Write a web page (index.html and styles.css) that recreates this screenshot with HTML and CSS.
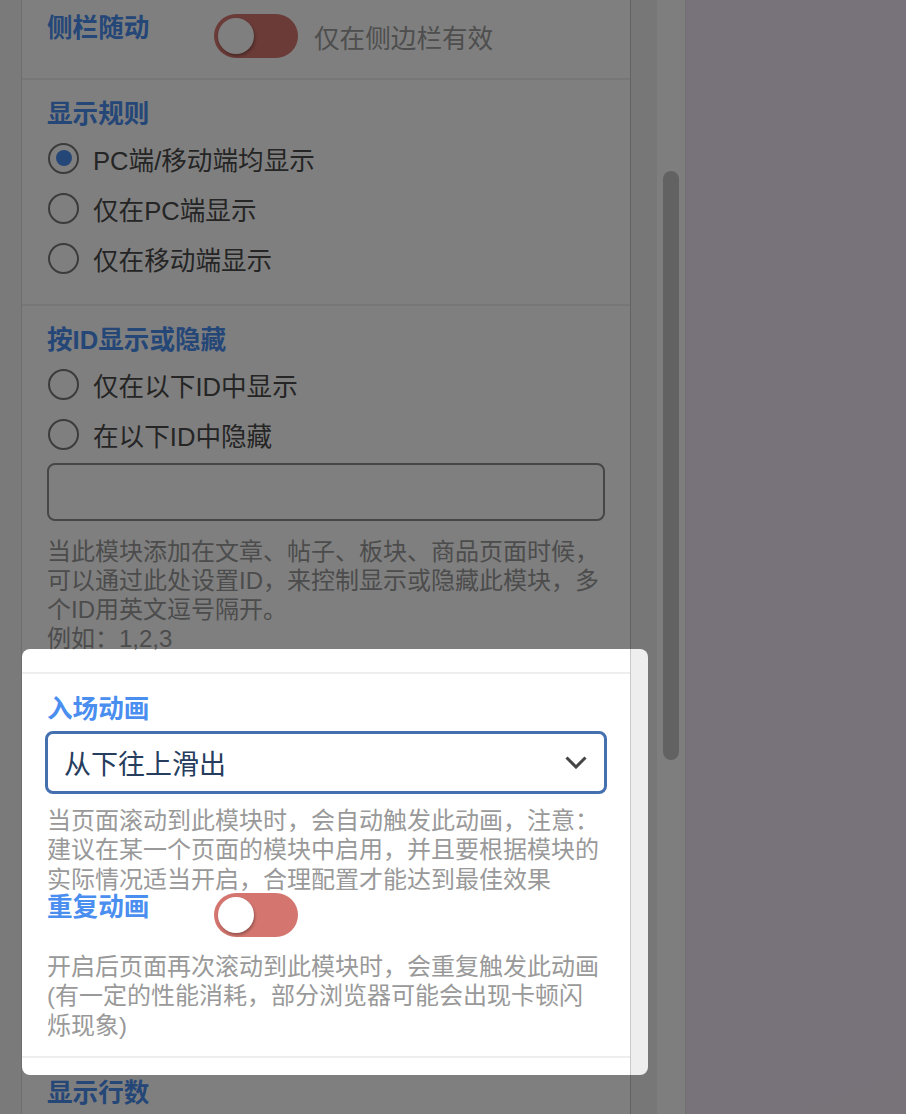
FILE: index.html
```html
<!DOCTYPE html>
<html lang="zh-CN">
<head>
<meta charset="utf-8">
<title>模块设置</title>
<link rel="stylesheet" href="styles.css">
</head>
<body>
<div class="app">
  <div class="left-gutter"></div>
  <div class="panel">
    <section class="sec sec-first">
      <div class="toggle-row">
        <div class="label">侧栏随动</div>
        <div class="toggle"><span class="knob"></span></div>
        <div class="hint">仅在侧边栏有效</div>
      </div>
    </section>

    <section class="sec">
      <div class="label">显示规则</div>
      <div class="radios">
        <div class="radio-row"><span class="radio checked"></span><span class="radio-text">PC端/移动端均显示</span></div>
        <div class="radio-row"><span class="radio"></span><span class="radio-text">仅在PC端显示</span></div>
        <div class="radio-row"><span class="radio"></span><span class="radio-text">仅在移动端显示</span></div>
      </div>
    </section>

    <section class="sec sec-id">
      <div class="label">按ID显示或隐藏</div>
      <div class="radios">
        <div class="radio-row"><span class="radio"></span><span class="radio-text">仅在以下ID中显示</span></div>
        <div class="radio-row"><span class="radio"></span><span class="radio-text">在以下ID中隐藏</span></div>
      </div>
      <div class="text-input"></div>
      <p class="desc desc-id">当此模块添加在文章、帖子、板块、商品页面时候，<br>可以通过此处设置ID，来控制显示或隐藏此模块，多<br>个ID用英文逗号隔开。<br>例如：1,2,3</p>
    </section>

    <section class="sec sec-anim">
      <div class="label">入场动画</div>
      <div class="select">
        <span class="select-text">从下往上滑出</span>
        <svg class="chevron" width="22" height="13" viewBox="0 0 22 13"><polyline points="1.5,1.5 11,11 20.5,1.5" fill="none" stroke="#454545" stroke-width="3" stroke-linejoin="miter"/></svg>
      </div>
      <p class="desc desc-a">当页面滚动到此模块时，会自动触发此动画，注意：<br>建议在某一个页面的模块中启用，并且要根据模块的<br>实际情况适当开启，合理配置才能达到最佳效果</p>
      <div class="toggle-row toggle-row-repeat">
        <div class="label">重复动画</div>
        <div class="toggle"><span class="knob"></span></div>
      </div>
      <p class="desc desc-b">开启后页面再次滚动到此模块时，会重复触发此动画<br>(有一定的性能消耗，部分浏览器可能会出现卡顿闪<br>烁现象)</p>
    </section>

    <section class="sec sec-last">
      <div class="label">显示行数</div>
    </section>
  </div>
  <div class="gutter"></div>
  <div class="track"><div class="thumb"></div></div>
  <div class="preview"></div>
  <div class="spotlight"></div>
</div>
</body>
</html>
```

FILE: styles.css
```css
html, body {
  margin: 0;
  padding: 0;
}
body {
  width: 906px;
  height: 1114px;
  overflow: hidden;
  font-family: "Liberation Sans", "Noto Sans CJK SC", sans-serif;
  background: #ffffff;
}
.app {
  position: relative;
  display: flex;
  width: 906px;
  height: 1114px;
  overflow: hidden;
}
.left-gutter {
  width: 21px;
  flex: none;
  background: #f4f4f4;
  border-right: 1px solid #dcdcdc;
}
.panel {
  width: 608px;
  flex: none;
  background: #ffffff;
  border-right: 1px solid #c7c7cc;
}
.gutter {
  width: 26px;
  flex: none;
  background: #eeeeee;
}
.track {
  width: 28px;
  flex: none;
  background: #fdfdfd;
  border-right: 1px solid #e0e0e0;
}
.thumb {
  margin: 171px 0 0 6px;
  width: 16px;
  height: 589px;
  border-radius: 8px;
  background: #c5c5c5;
}
.preview {
  flex: 1;
  background: linear-gradient(160deg, #f0e6f4 0%, #f1e7f5 60%, #efe6f3 100%);
}

.sec {
  padding: 20px 25px 21px;
  border-bottom: 2px solid #eeeeee;
}
.sec-first {
  padding: 14px 25px 20px;
}
.sec-id {
  padding-bottom: 19px;
}
.sec-anim {
  padding: 21px 25px 16px;
}
.sec-last {
  padding-top: 21px;
  border-bottom: none;
}
.label {
  font-size: 25.6px;
  line-height: 28px;
  font-weight: 700;
  color: #4a8ef0;
  white-space: nowrap;
}

.toggle-row {
  display: flex;
  align-items: center;
}
.toggle-row .label {
  width: 167px;
  flex: none;
  align-self: flex-start;
}
.toggle {
  position: relative;
  width: 84px;
  height: 44px;
  flex: none;
  border-radius: 22px;
  background: #d4766f;
}
.knob {
  position: absolute;
  left: 4px;
  top: 4px;
  width: 36px;
  height: 36px;
  border-radius: 50%;
  background: #ffffff;
  box-shadow: 1px 2px 3px rgba(0, 0, 0, 0.3);
}
.hint {
  margin-left: 16px;
  font-size: 25.6px;
  color: #9c9c9c;
  white-space: nowrap;
}

.radios {
  margin-top: 5px;
}
.radio-row {
  display: flex;
  align-items: center;
  height: 50px;
  padding-left: 1px;
}
.radio {
  position: relative;
  width: 27px;
  height: 27px;
  flex: none;
  border: 2px solid #777777;
  border-radius: 50%;
  background: #ffffff;
}
.radio.checked::after {
  content: "";
  position: absolute;
  left: 5.5px;
  top: 5.5px;
  width: 16px;
  height: 16px;
  border-radius: 50%;
  background: #4a8ef0;
}
.radio-text {
  margin-left: 14px;
  font-size: 25.6px;
  color: #4a4a4a;
  white-space: nowrap;
}

.text-input {
  margin-top: 4px;
  height: 54px;
  border: 2px solid #8c8c8c;
  border-radius: 8px;
}

.desc {
  margin: 0;
  padding-top: 2px;
  font-size: 24px;
  line-height: 29.5px;
  color: #999999;
  white-space: nowrap;
}
.desc-id {
  margin-top: 13.5px;
  line-height: 29px;
}
.desc-a {
  margin-top: 9.5px;
}
.toggle-row-repeat {
  margin-top: -1px;
}
.desc-b {
  margin-top: 12.5px;
}

.select {
  display: flex;
  align-items: center;
  justify-content: space-between;
  margin: 8.5px -2px 0;
  height: 57px;
  padding: 0 17px 0 16px;
  border: 3px solid #4470b0;
  border-radius: 8px;
}
.select-text {
  font-size: 27px;
  color: #263d5e;
  white-space: nowrap;
}
.chevron {
  display: block;
}

.spotlight {
  position: absolute;
  left: 22px;
  top: 649px;
  width: 626px;
  height: 426px;
  border-radius: 8px;
  box-shadow: 0 0 0 3000px rgba(0, 0, 0, 0.5);
  pointer-events: none;
}
```
